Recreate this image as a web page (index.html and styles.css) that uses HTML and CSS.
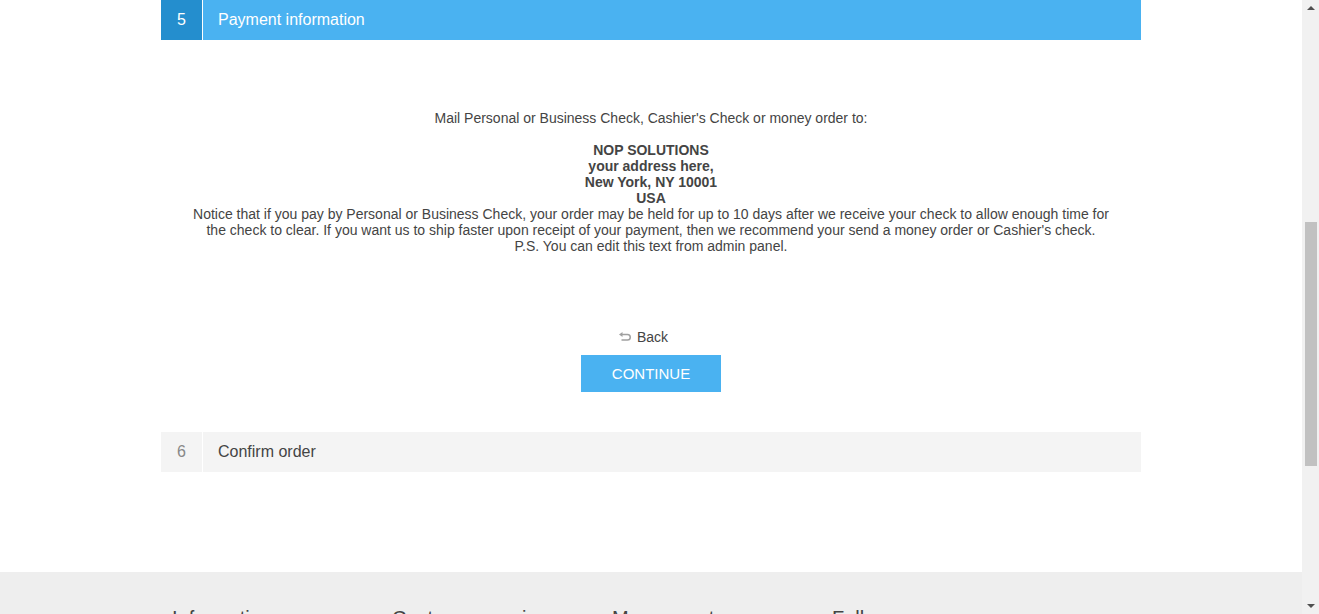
FILE: index.html
```html
<!DOCTYPE html>
<html>
<head>
<meta charset="utf-8">
<link rel="stylesheet" href="styles.css">
</head>
<body>
<div class="viewport">
  <div class="page">
    <main class="checkout">
      <section class="step active">
        <div class="step-title">
          <span class="number">5</span>
          <h2 class="title">Payment information</h2>
        </div>
        <div class="step-body">
          <div class="info">
            <p>Mail Personal or Business Check, Cashier's Check or money order to:<br><br>
            <strong>NOP SOLUTIONS<br>your address here,<br>New York, NY 10001<br>USA</strong><br>
            Notice that if you pay by Personal or Business Check, your order may be held for up to 10 days after we receive your check to allow enough time for the check to clear. If you want us to ship faster upon receipt of your payment, then we recommend your send a money order or Cashier's check.<br>
            P.S. You can edit this text from admin panel.</p>
          </div>
          <div class="buttons">
            <a class="back-link" href="#"><svg class="back-icon" width="12" height="10" viewBox="0 0 12 10"><path d="M3 2.5H8.5A2.75 2.75 0 0 1 8.5 8H2.5" fill="none" stroke="#a0a0a0" stroke-width="1.5"/><path d="M0 2.5L3.5 0V5Z" fill="#a0a0a0"/></svg>Back</a>
            <button class="continue">CONTINUE</button>
          </div>
        </div>
      </section>
      <section class="step">
        <div class="step-title inactive">
          <span class="number">6</span>
          <h2 class="title">Confirm order</h2>
        </div>
      </section>
    </main>
    <footer class="footer">
      <div class="footer-cols">
        <div class="col"><h3>Information</h3></div>
        <div class="col"><h3>Customer service</h3></div>
        <div class="col"><h3>My account</h3></div>
        <div class="col"><h3>Follow us</h3></div>
      </div>
    </footer>
  </div>
  <div class="scrollbar">
    <span class="arrow up"></span>
    <div class="track"><div class="thumb"></div></div>
    <span class="arrow down"></span>
  </div>
</div>
</body>
</html>
```

FILE: styles.css
```css
*, *::before, *::after {
  box-sizing: border-box;
}
html, body {
  margin: 0;
  padding: 0;
  height: 100%;
  overflow: hidden;
}
body {
  font-family: Arial, "Liberation Sans", Helvetica, sans-serif;
  color: #444;
  background: #fff;
}
.viewport {
  display: flex;
  height: 614px;
}
.page {
  flex: 1;
  display: flex;
  flex-direction: column;
  overflow: hidden;
}
.checkout {
  width: 980px;
  margin: 0 auto;
  height: 572px;
  flex-shrink: 0;
}
.step-title {
  display: flex;
  height: 40px;
  background: #4ab2f1;
  color: #fff;
}
.step-title .number {
  width: 42px;
  border-right: 1px solid #fff;
  background: #248ece;
  display: flex;
  align-items: center;
  justify-content: center;
  font-size: 16px;
}
.step-title .title {
  margin: 0;
  padding-left: 15px;
  font-size: 16px;
  font-weight: normal;
  line-height: 40px;
}
.step-title.inactive {
  background: #f4f4f4;
  color: #444;
}
.step-title.inactive .number {
  background: #f4f4f4;
  color: #888;
}
.step-body {
  padding-top: 70px;
}
.info p {
  margin: 0;
  text-align: center;
  font-size: 14px;
  line-height: 16px;
  padding: 0 30px;
}
.buttons {
  display: flex;
  flex-direction: column;
  align-items: center;
  padding-top: 75px;
  padding-bottom: 40px;
}
.back-link {
  display: flex;
  align-items: center;
  gap: 6px;
  height: 16px;
  font-size: 14px;
  color: #444;
  text-decoration: none;
  margin-bottom: 10px;
  margin-right: 15px;
}
.back-icon {
  display: block;
}
.continue {
  width: 140px;
  height: 37px;
  border: 0;
  background: #4ab2f1;
  color: #fff;
  font-family: inherit;
  font-size: 15px;
  padding: 0;
}
.footer {
  background: #eee;
  flex: 1;
}
.footer-cols {
  width: 980px;
  margin: 0 auto;
  display: flex;
  padding-top: 35px;
}
.col {
  width: 220px;
  padding-left: 11px;
}
.col h3 {
  margin: 0;
  font-size: 20px;
  font-weight: normal;
  color: #444;
}
.scrollbar {
  width: 17px;
  background: #f1f1f1;
  display: flex;
  flex-direction: column;
  align-items: center;
}
.arrow {
  width: 0;
  height: 0;
  border-left: 4px solid transparent;
  border-right: 4px solid transparent;
}
.arrow.up {
  margin-top: 6px;
  border-bottom: 4px solid #505050;
}
.arrow.down {
  margin-bottom: 6px;
  border-top: 4px solid #505050;
}
.track {
  flex: 1;
  width: 100%;
  display: flex;
  justify-content: center;
}
.thumb {
  width: 12px;
  margin-top: 212px;
  height: 244px;
  background: #c1c1c1;
}
```
